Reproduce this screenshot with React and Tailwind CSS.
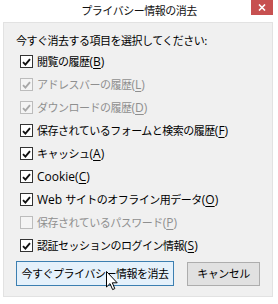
import React from 'react';

const items = [
  { label: '閲覧の履歴', key: 'B', checked: true },
  { label: 'アドレスバーの履歴', key: 'L', checked: true, disabled: true },
  { label: 'ダウンロードの履歴', key: 'D', checked: true, disabled: true },
  { label: '保存されているフォームと検索の履歴', key: 'F', checked: true },
  { label: 'キャッシュ', key: 'A', checked: true },
  { latin: 'Cookie', label: '', key: 'C', checked: true },
  { latin: 'Web ', label: 'サイトのオフライン用データ', key: 'O', checked: true },
  { label: '保存されているパスワード', key: 'P', checked: false, disabled: true },
  { label: '認証セッションのログイン情報', key: 'S', checked: true },
];

const CheckBox = ({ checked, disabled }) => (
  <span
    className={`flex h-[13px] w-[13px] shrink-0 items-center justify-center border ${
      disabled ? 'border-[#bcbcbc] bg-[#f4f4f4]' : 'border-[#333333] bg-white'
    }`}
  >
    {checked && (
      <svg width="9" height="8" viewBox="0 0 9 8">
        <path
          d="M1 4.2 L3.4 6.6 L8 1.2"
          fill="none"
          stroke={disabled ? '#a8a8a8' : '#111111'}
          strokeWidth="1.9"
        />
      </svg>
    )}
  </span>
);

export default function App() {
  return (
    <div
      className="relative h-[304px] w-[278px] overflow-hidden bg-white text-[11px] tracking-[-0.5px] text-black"
      style={{ fontFamily: '"Noto Sans CJK JP", "Noto Sans", sans-serif' }}
    >
      {/* Title bar */}
      <div className="grid h-[22px] grid-cols-[1fr_auto_1fr] items-start">
        <div />
        <div className="pt-[3px] text-[11px] leading-[14px] text-[#111]">プライバシー情報の消去</div>
        <div className="flex justify-end pr-[5px]">
          <div className="flex h-[15px] w-[22px] items-center justify-center bg-[#c75050]">
            <svg width="8" height="7" viewBox="0 0 8 7">
              <path d="M1 0.5 L7 6.5 M7 0.5 L1 6.5" stroke="#fff" strokeWidth="1.6" />
            </svg>
          </div>
        </div>
      </div>

      {/* Body */}
      <div className="ml-[3px] h-[275px] w-[270px] border border-[#e2e2e2] bg-[#f0f0f0] pl-[12px] pt-[9px]">
        <p className="leading-[16px]">今すぐ消去する項目を選択してください:</p>
        <div className="mt-[2px] flex flex-col">
          {items.map((it) => (
            <label key={it.key} className="flex h-[23px] items-center gap-[4px] pl-[4px]">
              <CheckBox checked={it.checked} disabled={it.disabled} />
              <span className={it.disabled ? 'text-[#8f8f8f]' : 'text-black'}>
                {it.latin && (
                  <span
                    className="text-[12px] tracking-normal"
                    style={{ fontFamily: '"Open Sans", "Noto Sans", sans-serif' }}
                  >
                    {it.latin}
                  </span>
                )}
                {it.label}
                <span
                  className="text-[12px] tracking-normal"
                  style={{ fontFamily: '"Open Sans", "Noto Sans", sans-serif' }}
                >
                  (<span className="underline underline-offset-2">{it.key}</span>)
                </span>
              </span>
            </label>
          ))}
        </div>
        <div className="mt-[4px] flex items-center">
          <button className="h-[25px] w-[158px] border border-[#3c7fb1] bg-[#e5f1fb] text-[11px] tracking-[-0.5px]">
            今すぐプライバシー情報を消去
          </button>
          <button className="ml-[13px] h-[24px] w-[73px] border border-[#adadad] bg-[#e1e1e1] text-[11px] tracking-[-0.5px]">
            キャンセル
          </button>
        </div>
      </div>

      {/* Mouse pointer */}
      <svg className="absolute left-[106px] top-[271px]" width="13" height="20" viewBox="0 0 13 20">
        <path
          d="M0.5 0.5 L0.5 16 L4 12.6 L6.6 18.6 L8.8 17.6 L6.3 11.8 L11.2 11.8 Z"
          fill="#fff"
          stroke="#000"
          strokeWidth="1"
          strokeLinejoin="round"
        />
      </svg>
    </div>
  );
}
